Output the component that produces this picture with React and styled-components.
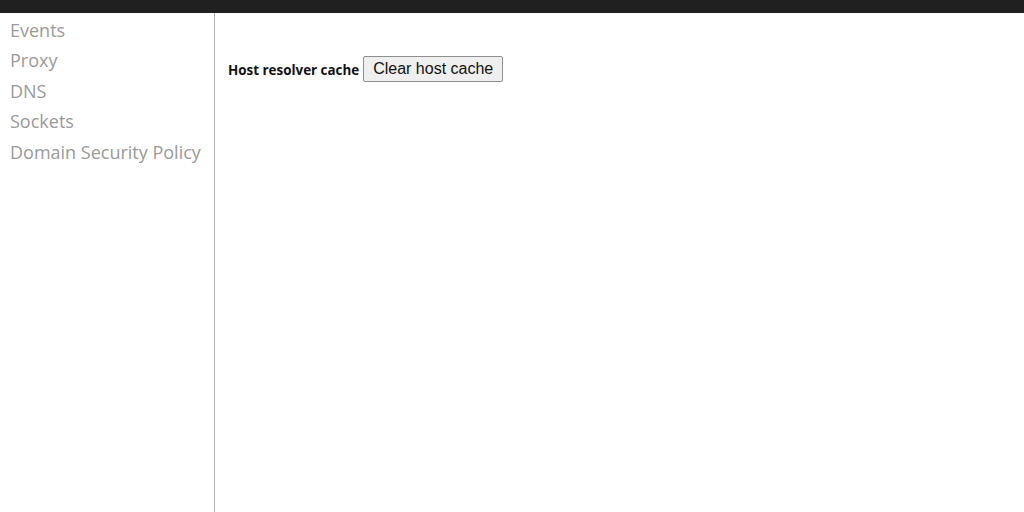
import React from "react";
import styled, { createGlobalStyle } from "styled-components";

const GlobalStyle = createGlobalStyle`
  html, body {
    margin: 0;
    padding: 0;
    background: #fff;
  }
  body {
    font-family: "Open Sans", "Noto Sans", sans-serif;
  }
`;

const Page = styled.div`
  display: flex;
  flex-direction: column;
  height: 512px;
  overflow: hidden;
`;

const TopBar = styled.div`
  height: 13px;
  background: #202020;
  flex: none;
`;

const Body = styled.div`
  display: flex;
  flex: 1;
  min-height: 0;
`;

const Sidebar = styled.ul`
  width: 215px;
  flex: none;
  margin: 0;
  padding: 2px 0 0 10px;
  box-sizing: border-box;
  border-right: 1px solid #b4b4b4;
  list-style: none;
`;

const NavItem = styled.li`
  font-family: "Open Sans", "Noto Sans", sans-serif;
  font-size: 18px;
  line-height: 30.4px;
  color: ${(p) => (p.$active ? "#333" : "#9a9a9a")};
  white-space: nowrap;
  cursor: pointer;
`;

const Main = styled.main`
  flex: 1;
  padding: 43px 0 0 13px;
`;

const Row = styled.div`
  display: flex;
  align-items: center;
  gap: 4px;
`;

const Label = styled.span`
  font-family: "Open Sans", "Noto Sans", sans-serif;
  font-weight: 700;
  font-size: 13.4px;
  color: #111;
  padding-top: 1px;
`;

const Button = styled.button`
  font-family: "Liberation Sans", Arial, sans-serif;
  font-size: 16px;
  height: 26px;
  padding: 0 9px;
  background: #efefef;
  border: 1px solid #8f8f8f;
  border-radius: 2px;
  color: #111;
`;

const items = ["Events", "Proxy", "DNS", "Sockets", "Domain Security Policy"];

export default function App() {
  return (
    <>
      <GlobalStyle />
      <Page>
        <TopBar />
        <Body>
          <Sidebar>
            {items.map((item) => (
              <NavItem key={item}>{item}</NavItem>
            ))}
          </Sidebar>
          <Main>
            <Row>
              <Label>Host resolver cache</Label>
              <Button>Clear host cache</Button>
            </Row>
          </Main>
        </Body>
      </Page>
    </>
  );
}
